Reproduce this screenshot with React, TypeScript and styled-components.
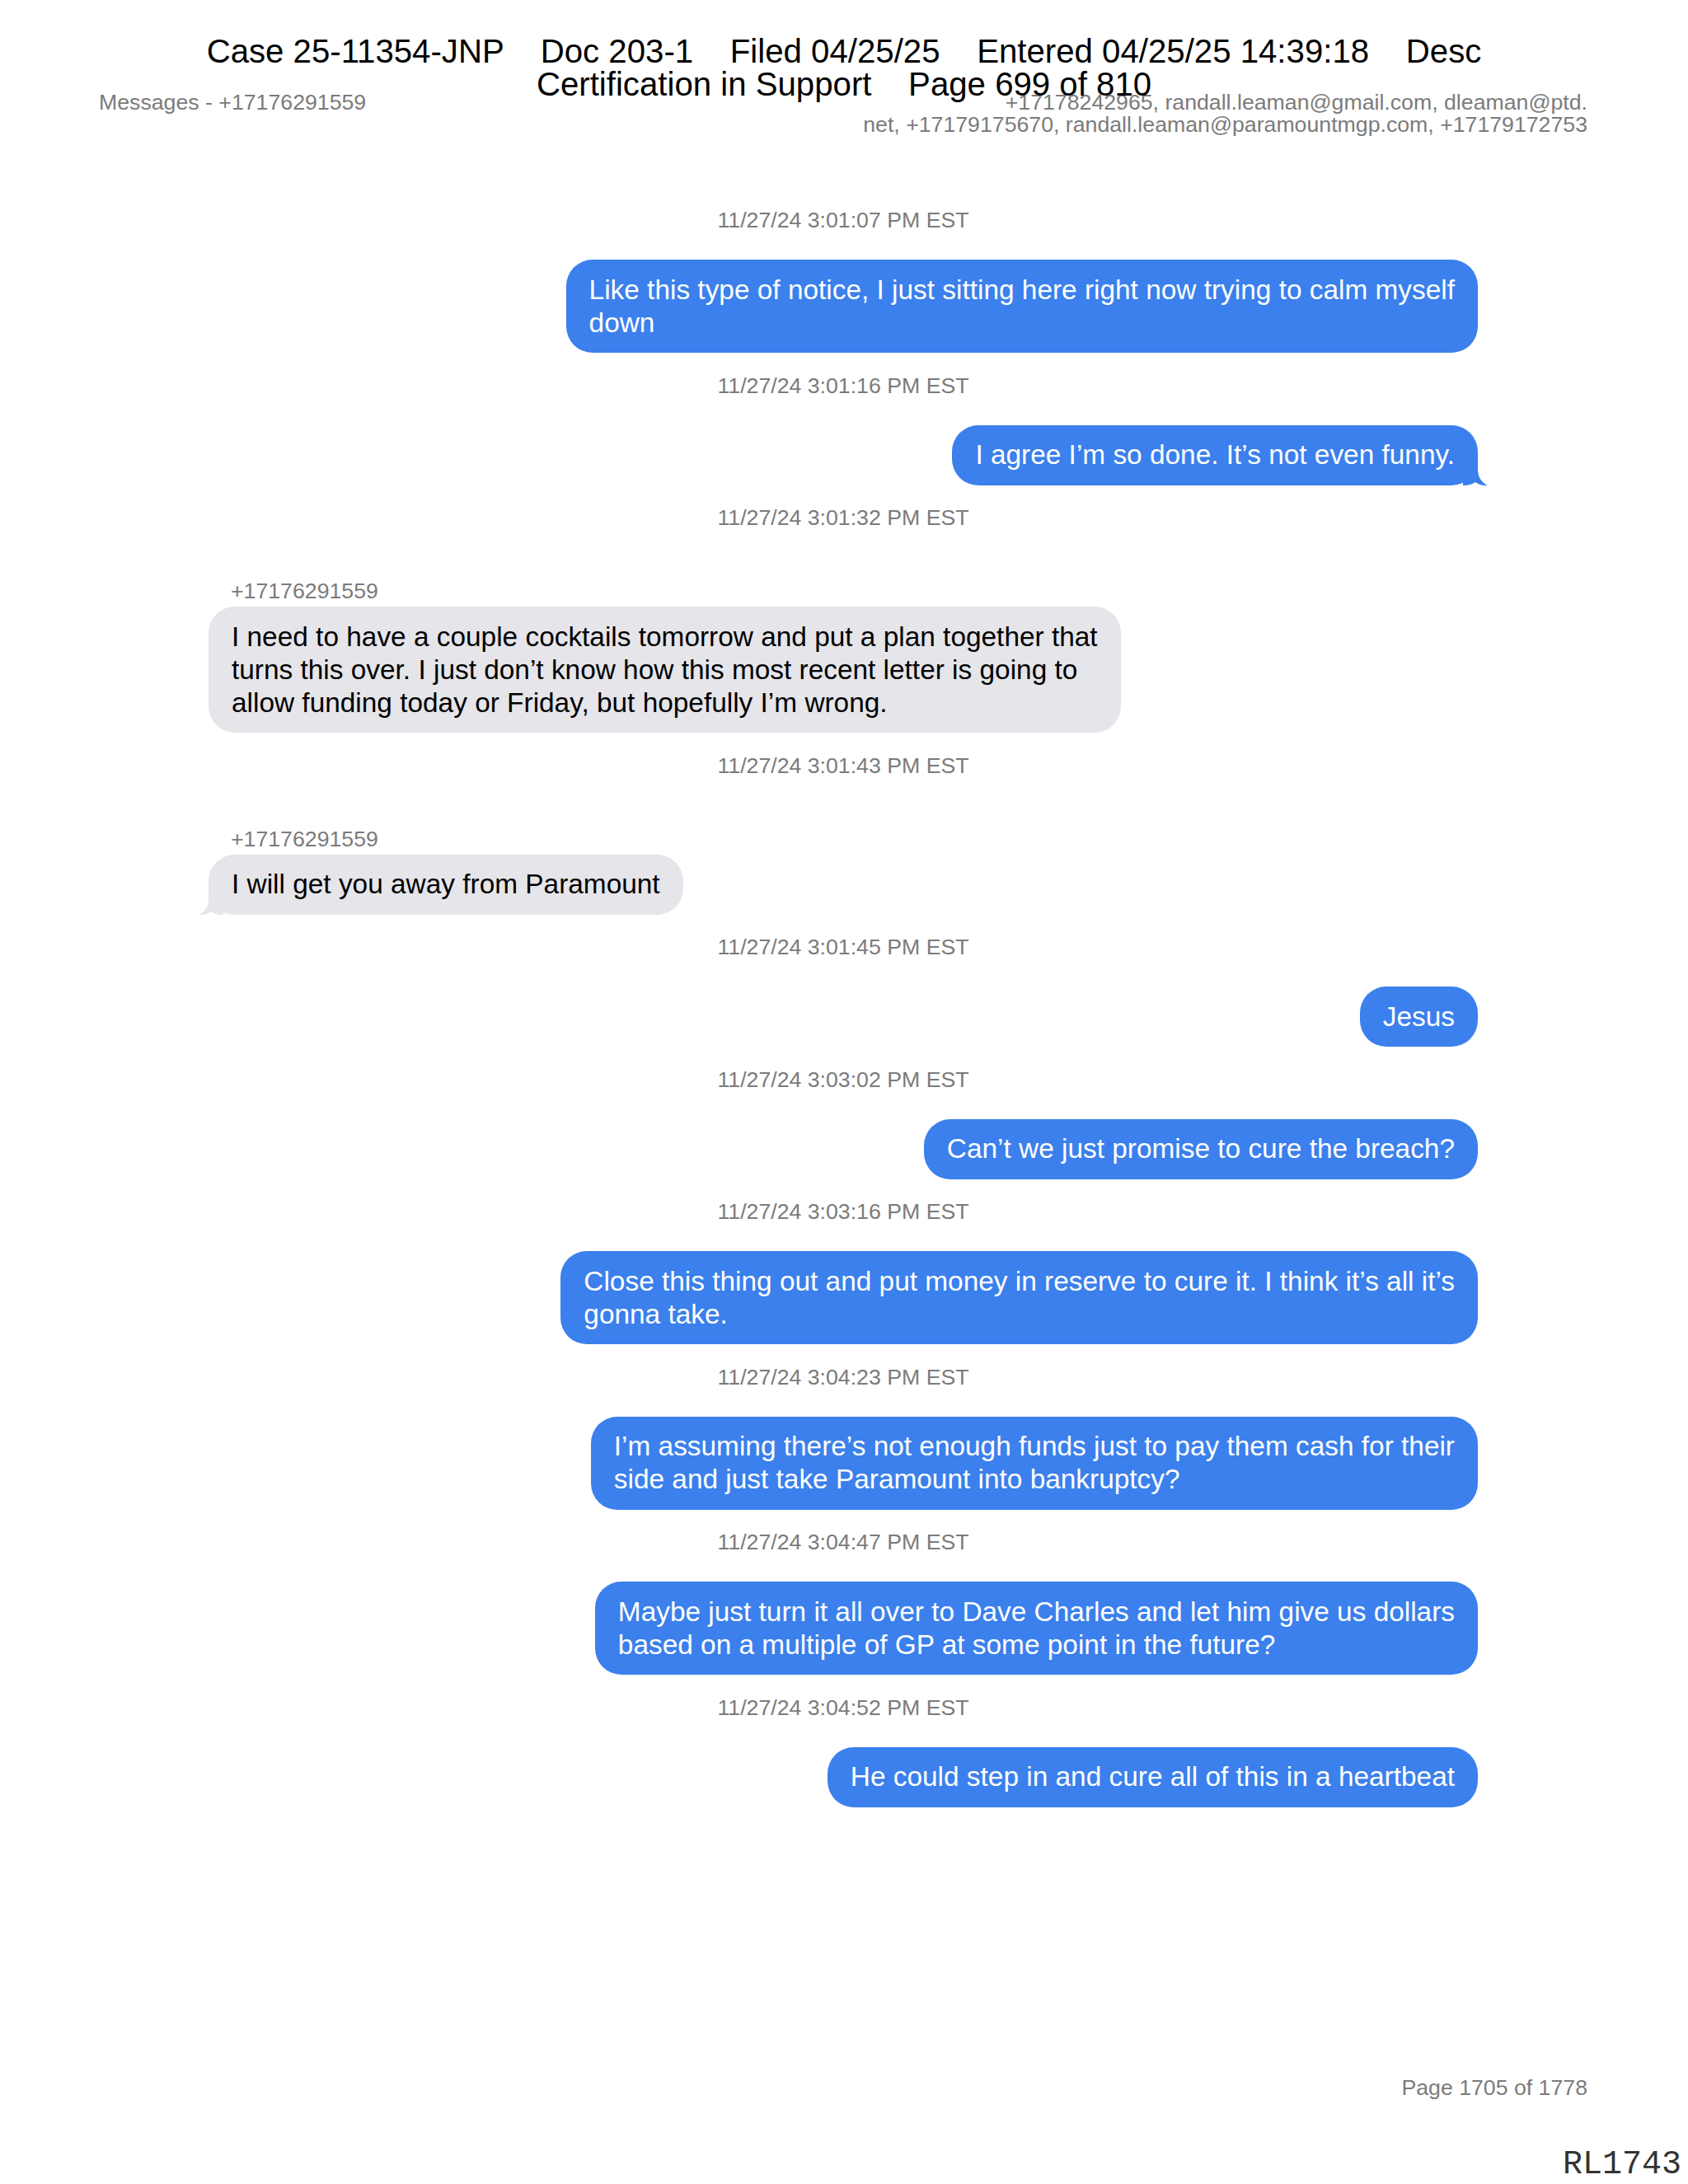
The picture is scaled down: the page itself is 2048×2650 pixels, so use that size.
import styled, { createGlobalStyle } from "styled-components";

const GlobalStyle = createGlobalStyle`
  html, body {
    margin: 0;
    padding: 0;
    background: #ffffff;
  }
  body {
    font-family: "Liberation Sans", Arial, sans-serif;
  }
`;

const Page = styled.div`
  position: relative;
  width: 2048px;
  min-height: 2650px;
  display: flex;
  flex-direction: column;
  background: #ffffff;
`;

// court filing stamp that sits over the exported page
const FilingStamp = styled.div`
  position: absolute;
  top: 43px;
  left: 0;
  right: 0;
  text-align: center;
  font-size: 40.2px;
  line-height: 40px;
  color: #000000;
  white-space: pre;
`;

const PageHeader = styled.header`
  display: flex;
  justify-content: space-between;
  align-items: flex-start;
  padding: 111px 122px 0 120px;
  font-size: 26.7px;
  line-height: 27px;
  color: #7b7b7b;
`;

const Recipients = styled.div`
  text-align: right;
`;

const Thread = styled.main`
  display: flex;
  flex-direction: column;
  padding: 89px 255px 0 253px;
`;

const Entry = styled.section`
  display: flex;
  flex-direction: column;
`;

const Timestamp = styled.div`
  text-align: center;
  font-size: 26.7px;
  line-height: 27px;
  color: #7b7b7b;
  margin-bottom: 34px;
`;

const SenderName = styled.div`
  font-size: 26.7px;
  line-height: 27px;
  color: #7b7b7b;
  padding-left: 27px;
  margin-top: 28px;
  margin-bottom: 5px;
`;

const Row = styled.div<{ $sent: boolean }>`
  display: flex;
  justify-content: ${(p) => (p.$sent ? "flex-end" : "flex-start")};
  margin-bottom: 26.5px;
`;

const Bubble = styled.div<{ $sent: boolean }>`
  position: relative;
  padding: 16.5px 28px;
  border-radius: 32px;
  font-size: 33.4px;
  line-height: 40px;
  white-space: nowrap;
  background: ${(p) => (p.$sent ? "#3b80ec" : "#e5e5ea")};
  color: ${(p) => (p.$sent ? "#ffffff" : "#000000")};
`;

const Line = styled.div``;

const Tail = styled.svg<{ $sent: boolean }>`
  position: absolute;
  bottom: 0;
  width: 30px;
  height: 34px;
  ${(p) => (p.$sent ? "right: -12px;" : "left: -12px; transform: scaleX(-1);")}
`;

const Footer = styled.footer`
  margin-top: auto;
  display: flex;
  flex-direction: column;
  align-items: flex-end;
`;

const PageNumber = styled.div`
  font-size: 26.7px;
  line-height: 27px;
  color: #7b7b7b;
  padding-right: 122px;
`;

const Bates = styled.div`
  font-family: "Liberation Mono", "Courier New", monospace;
  font-size: 40px;
  line-height: 40px;
  color: #333333;
  margin-top: 60px;
  padding-right: 8px;
  margin-bottom: 3px;
`;

interface Message {
  time: string;
  lines: string[];
  sent: boolean;
  sender?: string;
  tail?: boolean;
}

// lines are kept as they wrap in the exported transcript
const messages: Message[] = [
  {
    time: "11/27/24 3:01:07 PM EST",
    lines: ["Like this type of notice, I just sitting here right now trying to calm myself", "down"],
    sent: true,
  },
  {
    time: "11/27/24 3:01:16 PM EST",
    lines: ["I agree I\u2019m so done. It\u2019s not even funny."],
    sent: true,
    tail: true,
  },
  {
    time: "11/27/24 3:01:32 PM EST",
    lines: [
      "I need to have a couple cocktails tomorrow and put a plan together that",
      "turns this over. I just don\u2019t know how this most recent letter is going to",
      "allow funding today or Friday, but hopefully I\u2019m wrong.",
    ],
    sent: false,
    sender: "+17176291559",
  },
  {
    time: "11/27/24 3:01:43 PM EST",
    lines: ["I will get you away from Paramount"],
    sent: false,
    sender: "+17176291559",
    tail: true,
  },
  { time: "11/27/24 3:01:45 PM EST", lines: ["Jesus"], sent: true },
  {
    time: "11/27/24 3:03:02 PM EST",
    lines: ["Can\u2019t we just promise to cure the breach?"],
    sent: true,
  },
  {
    time: "11/27/24 3:03:16 PM EST",
    lines: ["Close this thing out and put money in reserve to cure it. I think it\u2019s all it\u2019s", "gonna take."],
    sent: true,
  },
  {
    time: "11/27/24 3:04:23 PM EST",
    lines: [
      "I\u2019m assuming there\u2019s not enough funds just to pay them cash for their",
      "side and just take Paramount into bankruptcy?",
    ],
    sent: true,
  },
  {
    time: "11/27/24 3:04:47 PM EST",
    lines: [
      "Maybe just turn it all over to Dave Charles and let him give us dollars",
      "based on a multiple of GP at some point in the future?",
    ],
    sent: true,
  },
  {
    time: "11/27/24 3:04:52 PM EST",
    lines: ["He could step in and cure all of this in a heartbeat"],
    sent: true,
  },
];

const BubbleTail = ({ sent }: { sent: boolean }) => (
  <Tail $sent={sent} viewBox="0 0 30 34">
    <path
      d="M0 0 H18 V14 C18 24 22 30 30 34 C24 34.5 19 33 15 30 C11 33 6 34 0 34 Z"
      fill={sent ? "#3b80ec" : "#e5e5ea"}
    />
  </Tail>
);

const App = () => {
  return (
    <>
      <GlobalStyle />
      <Page>
        <PageHeader>
          <div>Messages - +17176291559</div>
          <Recipients>
            <div>+17178242965, randall.leaman@gmail.com, dleaman@ptd.</div>
            <div>net, +17179175670, randall.leaman@paramountmgp.com, +17179172753</div>
          </Recipients>
        </PageHeader>

        <Thread>
          {messages.map((m) => (
            <Entry key={m.time}>
              <Timestamp>{m.time}</Timestamp>
              {m.sender && <SenderName>{m.sender}</SenderName>}
              <Row $sent={m.sent}>
                <Bubble $sent={m.sent}>
                  {m.lines.map((l, i) => (
                    <Line key={i}>{l}</Line>
                  ))}
                  {m.tail && <BubbleTail sent={m.sent} />}
                </Bubble>
              </Row>
            </Entry>
          ))}
        </Thread>

        <Footer>
          <PageNumber>Page 1705 of 1778</PageNumber>
          <Bates>RL1743</Bates>
        </Footer>

        <FilingStamp>
          {"Case 25-11354-JNP    Doc 203-1    Filed 04/25/25    Entered 04/25/25 14:39:18    Desc\nCertification in Support    Page 699 of 810"}
        </FilingStamp>
      </Page>
    </>
  );
};

export default App;
